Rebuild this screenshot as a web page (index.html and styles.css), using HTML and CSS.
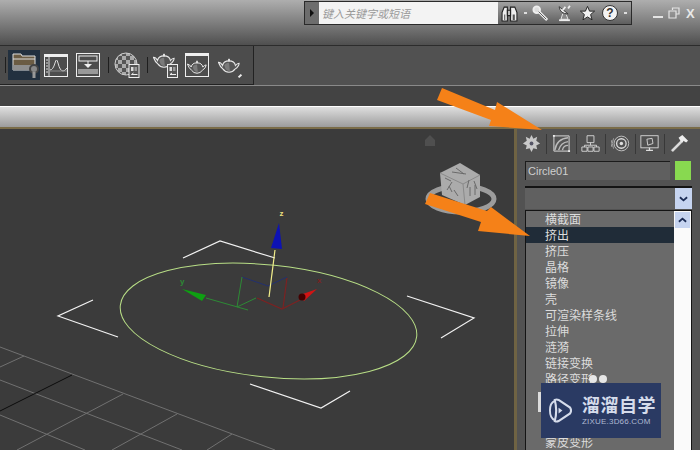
FILE: index.html
```html
<!DOCTYPE html>
<html lang="zh">
<head>
<meta charset="utf-8">
<title>3ds Max</title>
<link rel="stylesheet" href="styles.css">
</head>
<body>
<svg class="defs" width="0" height="0">
  <symbol id="teapot" viewBox="0 0 24 16">
    <path d="M5 8Q6 3 12 3Q18 3 19 8Q21 5.500 23 5.500Q23 9 18.500 12Q16 15.500 12 15.500Q8 15.500 5.500 12Q2 9 .5 4.500Q3 4.500 5 8Z" fill="#555" stroke="#e8e8e8" stroke-width="1.200"/>
    <path d="M12 .5v3" stroke="#e8e8e8" stroke-width="2"/>
    <path d="M7 8Q8 5 12 5L13 14Q8 14 7 8Z" fill="#7a7a7a"/>
  </symbol>
  <symbol id="doc" viewBox="0 0 11 14">
    <rect x=".5" y=".5" width="10" height="13" fill="#555" stroke="#eee"/>
    <rect x="2.500" y="3" width="2.500" height="4" fill="#ddd"/><rect x="6" y="3" width="2.500" height="4" fill="#999"/>
    <path d="M3 10.500h6M3 10.500l2-1.500" stroke="#eee" fill="none"/>
  </symbol>
</svg>
<div class="app">
  <header class="titlebar">
    <div class="search">
      <div class="search-arrow"><i></i></div>
      <div class="search-input">键入关键字或短语</div>
      <div class="search-tools">
        <svg class="ic-bino" viewBox="0 0 16 16"><path d="M1 15V7l2-5h3v13zM9 15V2h4l2 5v8z" fill="#eee" stroke="#222"/><path d="M6 5h3v5H6z" fill="#bbb" stroke="#222"/><path d="M3 9h1v5H3zM11 9h2v5h-2z" fill="#555"/></svg>
        <i class="caret"></i>
        <svg class="ic-key" viewBox="0 0 18 18"><circle cx="5" cy="5" r="3.500" fill="#ddd" stroke="#eee" stroke-width="2"/><path d="M7 7l9 9" stroke="#eee" stroke-width="3"/><path d="M7 7l8 8" stroke="#555"/></svg>
        <svg class="ic-sat" viewBox="0 0 16 20"><path d="M2 3Q3 11 12 11Z" fill="#eee" stroke="#333"/><path d="M9 3l-3 4M14 2l-2 3" stroke="#eee" stroke-width="2"/><path d="M6 11l-2 6h8l-2-5" fill="#888" stroke="#eee"/><path d="M2 18h12" stroke="#eee" stroke-width="2"/></svg>
        <svg class="ic-star" viewBox="0 0 18 18"><path d="M9 1.500l2.200 5h5.300l-4.200 3.600 1.500 5.600L9 12.600l-4.800 3.100 1.500-5.600L1.500 6.500h5.300z" fill="#f0f0f0" stroke="#222"/></svg>
        <div class="ic-help">?</div>
        <i class="caret"></i>
      </div>
    </div>
    <div class="winbtns">
      <svg class="win-min" viewBox="0 0 12 12"><path d="M1 10h10" stroke="#e4e4e4" stroke-width="2"/></svg>
      <svg class="win-res" viewBox="0 0 12 12"><path d="M4.500 3V1H11v6H8.500M1 4h7v7H1z" fill="none" stroke="#e4e4e4" stroke-width="1.200"/></svg>
      <span class="win-x">X</span>
    </div>
  </header>

  <div class="toolrow">
    <div class="toolgroup">
      <i class="sep sep-a"></i>
      <div class="tool-active">
        <svg class="ic-folder" viewBox="0 0 30 28"><path d="M4 3h8l1 2h13v14H4z" fill="#6b5c44" stroke="#ddd"/><path d="M4 8h22" stroke="#ddd"/><rect x="4" y="14" width="22" height="5" fill="#8f8f8f"/><circle cx="25" cy="18" r="4" fill="#888" stroke="#444" stroke-width="2"/><rect x="23.500" y="21" width="3" height="6" fill="#999"/></svg>
      </div>
      <svg class="ic-win" viewBox="0 0 24 23"><rect x=".5" y=".5" width="23" height="22" fill="#4d4d4d" stroke="#eee"/><path d="M0 2h24" stroke="#eee" stroke-width="2"/><path d="M5 3v19" stroke="#ddd"/><path d="M2 6h2M2 9h2M2 12h2M2 15h2M2 18h2" stroke="#ddd"/><path d="M6 16Q9 16 11 9Q12.500 3 14 9Q16 17 19 17Q21 17 23 14" fill="none" stroke="#ddd"/><path d="M6 17h17" stroke="#888"/></svg>
      <svg class="ic-win ic-win-b" viewBox="0 0 24 24"><rect x=".5" y=".5" width="23" height="23" fill="#4d4d4d" stroke="#eee"/><rect x="3" y="3" width="18" height="5" fill="none" stroke="#eee"/><path d="M12 8v5" stroke="#eee"/><path d="M8 11h8l-4 4z" fill="#eee"/><rect x="2" y="16" width="20" height="5" fill="#999"/></svg>
      <i class="sep sep-b"></i>
      <svg class="ic-sphere" viewBox="0 0 26 26"><defs><pattern id="chk" width="8" height="8" patternUnits="userSpaceOnUse"><rect width="8" height="8" fill="#aaa"/><rect width="4" height="4" fill="#555"/><rect x="4" y="4" width="4" height="4" fill="#555"/></pattern></defs><circle cx="12" cy="12" r="11" fill="url(#chk)" stroke="#ccc"/><use href="#doc" x="14" y="12" width="12" height="14"/></svg>
      <i class="sep sep-c"></i>
      <div class="ic-potdoc">
        <svg class="ic-pot" viewBox="0 0 24 16"><use href="#teapot"/></svg>
        <svg class="ic-potdoc-doc" viewBox="0 0 11 14"><use href="#doc"/></svg>
      </div>
      <svg class="ic-win ic-win-c" viewBox="0 0 24 24"><rect x=".5" y=".5" width="23" height="23" fill="#4d4d4d" stroke="#eee"/><path d="M0 2h24" stroke="#eee" stroke-width="2"/><use href="#teapot" x="2" y="7" width="20" height="14"/></svg>
      <div class="ic-render">
        <svg class="ic-pot2" viewBox="0 0 24 16"><use href="#teapot"/></svg>
        <i class="corner"></i>
      </div>
    </div>
  </div>

  <div class="strip"></div>
  <div class="ribbon"></div>

  <main class="workspace">
    <section class="viewport">
      <svg class="scene" viewBox="0 129 514 321">
        <g class="grid">
          <path d="M0 347L275 450M0 380L182 450M0 415L85 450M0 367L24 356M17 450L123 394M112 450L177 414M207 450L232 434"/>
        </g>
        <path class="gridblack" d="M0 411L72 375"/>
        <path class="house" d="M425 140l5-5 5 5v6h-10z"/>
        <ellipse class="shape" cx="268.500" cy="321" rx="149" ry="56" transform="rotate(6 268.500 321)"/>
        <path class="bracket" d="M183 258L220 241L275 258M93 300L58 316L118 337M407 296L474 318L441 338M250 384L321 408L350 391"/>
        <path class="ax-blue" d="M242 277L268 286L287 277"/>
        <path class="ax-green" d="M206 298L248 310M242 277L237 307L256 298"/>
        <path class="ax-red" d="M257 298L282 309L300 300M287 278L283 308"/>
        <path class="ax-yellow" d="M275 250L269 297"/>
        <path d="M279 223L271 248L282 249Z" fill="#0d12b4"/>
        <path d="M182 289L206 295L202 301Z" fill="#0e9f12"/>
        <path d="M317 289L300 295L304 301Z" fill="#d11414"/>
        <circle cx="302" cy="297" r="3.500" fill="#400"/>
        <text class="lab lab-z" x="279.500" y="216">z</text>
        <text class="lab lab-y" x="180" y="284">y</text>
        <text class="lab lab-x" x="317" y="283">x</text>
        <ellipse cx="461" cy="199" rx="33" ry="13" fill="none" stroke="#9c9c9c" stroke-width="5"/>
        <path d="M460 163L480 175L480 197L465 205L442 195L440 173Z" fill="#ababab"/>
        <path d="M440 173L463 184L480 175M463 184L465 205" fill="none" stroke="#8a8a8a"/>
        <path d="M447 190l5-8M470 196v-9M475 195v-10M452 172l14 2M449 186l3 6M456 168l8 6M445 178l6 3M469 180l-2 8M474 181l3 8M454 190l4 6" stroke="#6a6a6a" fill="none"/>
      </svg>
    </section>
    <i class="tanline"></i>
    <aside class="panel">
      <nav class="tabs">
        <svg class="tab" viewBox="0 0 20 20"><path d="M10 1l2 4 4-2-1 4 4 3-4 2 1 4-4-1-2 4-2-4-4 1 1-4-4-2 4-3-1-4 4 2z" fill="#c9c9c9"/><circle cx="10" cy="10" r="2" fill="#556"/></svg>
        <i class="tabsep"></i>
        <svg class="tab" viewBox="0 0 20 20"><path d="M2 2h16v16H2z" fill="#555" stroke="#ddd"/><path d="M3 17Q5 5 17 4M7 17Q9 9 17 8M11 17Q12 12 17 12" fill="none" stroke="#bbb" stroke-width="1.500"/><path d="M1 1h2v2H1zM17 17h2v2h-2z" fill="#eee"/></svg>
        <i class="tabsep"></i>
        <svg class="tab" viewBox="0 0 22 20"><path d="M7 1h8v8H7zM1 14h6v5H1zM8 14h6v5H8zM15 14h6v5h-6zM11 9v3M4 14v-2h14v2" fill="none" stroke="#ddd"/></svg>
        <i class="tabsep"></i>
        <svg class="tab" viewBox="0 0 22 20"><circle cx="12" cy="10" r="8.500" fill="none" stroke="#ccc"/><circle cx="12" cy="10" r="5.500" fill="none" stroke="#ddd" stroke-width="1.500"/><circle cx="12" cy="10" r="2" fill="#ddd"/><path d="M3 4Q0 10 3 16M1 6Q-1 10 1 14" fill="none" stroke="#aaa"/></svg>
        <i class="tabsep"></i>
        <svg class="tab" viewBox="0 0 22 20"><rect x="1" y="1" width="20" height="14" fill="#505050" stroke="#ddd"/><path d="M8 5l6-1 1 6-6 2z" fill="none" stroke="#ddd"/><path d="M7 18h8M11 15v3" stroke="#ddd" stroke-width="1.500"/></svg>
        <i class="tabsep"></i>
        <svg class="tab" viewBox="0 0 20 20"><path d="M1 17l11-11 2 2L3 19z" fill="#ddd" stroke="#888" stroke-width=".5"/><path d="M9 4l4-3 6 6-2 2-3-2-1 2-2-2z" fill="#eee"/></svg>
      </nav>
      <div class="namerow">
        <div class="namefield">Circle01</div>
        <div class="swatch"></div>
      </div>
      <div class="combo">
        <div class="combo-text"></div>
        <div class="combo-btn"><svg viewBox="0 0 10 6"><path d="M1 1l4 3.500L9 1" fill="none" stroke="#1c2c55" stroke-width="2"/></svg></div>
      </div>
      <div class="listbox">
        <ul class="list">
          <li>横截面</li>
          <li class="sel">挤出</li>
          <li>挤压</li>
          <li>晶格</li>
          <li>镜像</li>
          <li>壳</li>
          <li>可渲染样条线</li>
          <li>拉伸</li>
          <li>涟漪</li>
          <li>链接变换</li>
          <li>路径变形</li>
          <li class="gap"></li>
          <li>蒙皮变形</li>
        </ul>
        <div class="scroll">
          <div class="scroll-btn"><svg viewBox="0 0 10 6"><path d="M1 5l4-3.500L9 5" fill="none" stroke="#1c2c55" stroke-width="2"/></svg></div>
        </div>
      </div>
    </aside>
  </main>
</div>

<svg class="arrows" viewBox="0 0 700 450">
  <path d="M442 88L495 110L497 102L542 130L489 126L491 120L437 100Z"/>
  <path d="M430 193L487 211L491 207L530 236L478 231L481 222L425 204Z"/>
</svg>

<div class="dots"><i></i><i></i></div>
<i class="ghost"></i>

<div class="watermark">
  <svg class="wm-logo" viewBox="0 0 24 26"><path d="M6 3Q1 5 1 13T6 23" fill="none" stroke="#d5dceb" stroke-width="2"/><path d="M6 2Q8 1 10 2L22 10Q24 13 22 16L10 24Q8 25 6 24Q9 13 6 2Z" fill="none" stroke="#d5dceb" stroke-width="2.200"/><path d="M10 10l4 3-4 3z" fill="#d5dceb"/></svg>
  <div class="wm-text">
    <div class="wm-title">溜溜自学</div>
    <div class="wm-sub">ZIXUE.3D66.COM</div>
  </div>
</div>
</body>
</html>
```
FILE: styles.css
```css
* { box-sizing: border-box; }
html, body { margin: 0; padding: 0; }
body { width: 700px; height: 450px; overflow: hidden; position: relative; background: #3b3b3b; font-family: "Noto Sans CJK SC", "Liberation Sans", sans-serif; }
.defs { position: absolute; }
svg { display: block; flex: none; }
.app { width: 700px; height: 450px; display: flex; flex-direction: column; }

.titlebar { height: 46px; flex: none; display: flex; align-items: flex-start; padding: 1px 0 0 304px; background: linear-gradient(#aeaeae, #4f4f4f); border-bottom: 1px solid #2c2c2c; }
.search { width: 328px; height: 24px; display: flex; border: 1px solid #2a2a2a; background: linear-gradient(#a2a2a2, #5e5e5e); }
.search-arrow { width: 14px; display: flex; align-items: center; justify-content: center; background: #6d6d6d; }
.search-arrow i { border-left: 4px solid #111; border-top: 4px solid transparent; border-bottom: 4px solid transparent; }
.search-input { width: 179px; background: #f3f3f3; color: #9a9a9a; font-size: 11px; font-style: italic; line-height: 22px; padding-left: 3px; white-space: nowrap; }
.search-tools { flex: 1; display: flex; align-items: center; padding-left: 3px; position: relative; }
.ic-bino { width: 17px; height: 17px; }
.caret { width: 3px; height: 2px; background: #ddd; margin-left: 6px; }
.ic-key { width: 17px; height: 17px; margin-left: 5px; }
.ic-sat { width: 15px; height: 18px; margin-left: 8px; }
.ic-star { width: 17px; height: 17px; margin-left: 7px; }
.ic-help { width: 16px; height: 16px; margin-left: 6px; border-radius: 50%; background: #f4f4f4; border: 1px solid #333; color: #333; font: bold 12px/14px "Liberation Sans", sans-serif; text-align: center; }
.winbtns { display: flex; align-items: center; height: 24px; padding-left: 20px; gap: 4px; }
.win-min, .win-res { width: 12px; height: 12px; }
.win-x { color: #e8e8e8; font: bold 13px/13px "Liberation Sans", sans-serif; margin-left: 2px; }

.toolrow { height: 40px; flex: none; background: #515151; border-bottom: 1px solid #8a8a8a; }
.toolgroup { width: 254px; height: 39px; display: flex; align-items: center; background: #4c4c4c; border-right: 1px solid #222; border-bottom: 1px solid #222; position: relative; }
.sep { width: 1px; height: 16px; background: #1e1e1e; flex: none; }
.sep-a { margin-left: 5px; }
.tool-active { width: 32px; height: 30px; margin-left: 2px; background: #22303f; padding: 1px; flex: none; }
.ic-folder { width: 30px; height: 28px; }
.ic-win { width: 24px; height: 23px; margin-left: 4px; }
.ic-win-b { margin-left: 8px; height: 24px; }
.sep-b { margin-left: 8px; }
.ic-sphere { width: 26px; height: 26px; margin-left: 5px; }
.sep-c { margin-left: 7px; }
.ic-potdoc { width: 25px; height: 25px; margin-left: 5px; position: relative; flex: none; }
.ic-pot { width: 22px; height: 15px; }
.ic-potdoc-doc { position: absolute; right: 0; bottom: 0; width: 11px; height: 14px; }
.ic-win-c { margin-left: 7px; height: 24px; }
.ic-render { width: 24px; height: 24px; margin-left: 9px; position: relative; flex: none; display: flex; align-items: center; }
.ic-pot2 { width: 22px; height: 15px; }
.corner { position: absolute; right: 0; bottom: 0; width: 4px; height: 2px; background: #eee; transform: rotate(-45deg); }

.strip { height: 20px; flex: none; background: #434343; }
.ribbon { height: 23px; flex: none; border-top: 1px solid #fff; border-bottom: 2px solid #7a6c48; background: linear-gradient(#dedede, #9c9c9c); }

.workspace { flex: 1; min-height: 0; display: flex; }
.viewport { width: 514px; flex: none; background: #3b3b3b; }
.scene { width: 514px; height: 321px; }
.grid path { stroke: #717171; fill: none; }
.gridblack { stroke: #0d0d0d; fill: none; }
.house { fill: #4f4f4f; }
.shape { fill: none; stroke: #b8de86; stroke-width: 1; }
.bracket { fill: none; stroke: #f2f2f2; stroke-width: 1.200; }
.ax-blue { fill: none; stroke: #23306f; }
.ax-green { fill: none; stroke: #2d8a35; }
.ax-red { fill: none; stroke: #7c2222; stroke-width: 1.200; }
.ax-yellow { fill: none; stroke: #f2ee8a; stroke-width: 1.200; }
.lab { font: bold 8px "Liberation Sans", sans-serif; }
.lab-z { fill: #ecdf7e; }
.lab-y { fill: #2d8a35; }
.lab-x { fill: #7c2222; }

.tanline { width: 3px; flex: none; background: #6f6343; }
.panel { flex: 1; background: #525252; padding-left: 8px; display: flex; flex-direction: column; }
.tabs { height: 28px; flex: none; display: flex; align-items: center; margin-left: -3px; padding-top: 1px; }
.tab { width: 19px; height: 19px; }
.tabsep { width: 1px; height: 20px; background: #383838; margin: 0 5px; flex: none; margin-right: 4.500px; }
.namerow { display: flex; gap: 5px; margin-top: 4px; height: 19px; flex: none; }
.namefield { width: 145px; background: #5f5f5f; border: 1px solid #1c1c1c; border-width: 1px 0 0 1px; color: #cfcfcf; font: 11px/18px "Liberation Sans", sans-serif; padding-left: 2px; }
.swatch { width: 16px; background: #88d950; }
.combo { display: flex; width: 167px; height: 23px; margin-top: 6px; flex: none; border-top: 2px solid #141414; background: #606060; }
.combo-text { flex: 1; }
.combo-btn { width: 17px; background: #c6d4f0; display: flex; align-items: center; justify-content: center; }
.combo-btn svg, .scroll-btn svg { width: 9px; height: 6px; }
.listbox { width: 167px; flex: 1; min-height: 0; margin-top: 1px; display: flex; border: 1px solid #141414; border-width: 1px 1px 0; background: #6a6a6a; overflow: hidden; }
.list { list-style: none; margin: 0; padding: 0; flex: 1; min-width: 0; }
.list li { height: 16px; line-height: 15px; padding-left: 19px; font-size: 12px; color: #dcdcdc; white-space: nowrap; }
.list li.sel { background: #202c38; }
.list li.gap { height: 47px; }
.scroll { width: 17px; background: #fafafa; flex: none; padding: 1px 1px 0; }
.scroll-btn { height: 16px; background: #c6d4f0; display: flex; align-items: center; justify-content: center; }

.arrows { position: absolute; left: 0; top: 0; width: 700px; height: 450px; fill: #f58118; pointer-events: none; }
.dots { position: absolute; left: 589px; top: 375px; display: flex; gap: 2px; }
.dots i { width: 8px; height: 8px; border-radius: 50%; background: #e6e6e6; }
.ghost { position: absolute; left: 538px; top: 392px; width: 3px; height: 20px; background: #dcdcdc; }
.watermark { position: absolute; left: 541px; top: 383px; width: 120px; height: 55px; background: #2a3a63; display: flex; align-items: center; padding: 0 0 0 8px; gap: 10px; }
.wm-logo { width: 23px; height: 25px; }
.wm-text { color: #d5dceb; }
.wm-title { font-size: 18px; line-height: 19px; font-weight: 700; letter-spacing: .5px; white-space: nowrap; }
.wm-sub { font: 8px/9px "Liberation Sans", sans-serif; letter-spacing: .2px; color: #aeb9d2; white-space: nowrap; margin-top: 3px; }
```
